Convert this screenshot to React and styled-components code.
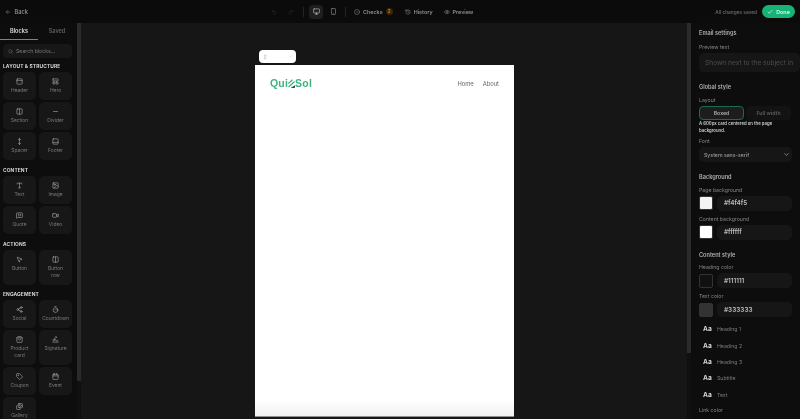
import styled, { createGlobalStyle } from "styled-components";
import {
  ArrowLeft, Undo2, Redo2, Monitor, Smartphone, CircleCheck, History, Eye, Check, Search,
  PanelTop, LayoutPanelTop, Columns2, Minus, MoveVertical, PanelBottom, Type, Image, MessageSquareQuote, Video,
  MousePointer2, Share2, Timer, ShoppingBag, Signature, Tag, Calendar, Images,
  ChevronDown, GripVertical,
} from "lucide-react";

const GlobalStyle = createGlobalStyle`
  html, body { margin: 0; padding: 0; background: #0b0b0b; }
  * { box-sizing: border-box; }
  body { font-family: Inter, "Liberation Sans", sans-serif; overflow: hidden; }
`;

const Page = styled.div`
  width: 800px;
  height: 419px;
  display: flex;
  flex-direction: column;
  overflow: hidden;
  color: #ccc;
  will-change: transform;
`;

const TopBar = styled.header`
  height: 23px;
  flex: none;
  background: #0b0b0b;
  display: flex;
  align-items: center;
  padding: 0 5px;
  font-size: 5.4px;
  font-weight: 600;
`;
const BackLink = styled.div`
  display: flex;
  align-items: center;
  gap: 3.5px;
  width: 23px;
  color: #8a8a8a;
  font-size: 5.6px;
`;
const Center = styled.div`
  display: flex;
  align-items: center;
  margin-left: 239px;
`;
const IconBtn = styled.div`
  width: 14px;
  height: 14px;
  display: flex;
  align-items: center;
  justify-content: center;
  border-radius: 4px;
  margin-right: ${(p) => p.$mr || 0}px;
  color: ${(p) => p.$color || "#999"};
  background: ${(p) => (p.$active ? "#1f1f1f" : "transparent")};
`;
const Sep = styled.div`
  width: 1px;
  height: 10px;
  background: #242424;
  margin-right: ${(p) => p.$mr}px;
`;
const ToolLink = styled.div`
  display: flex;
  align-items: center;
  gap: 3px;
  color: #8e8e8e;
  margin-right: ${(p) => p.$mr}px;
`;
const Badge = styled.span`
  width: 7px;
  height: 7px;
  border-radius: 50%;
  background: #3a2508;
  color: #c98a1c;
  font-size: 4.5px;
  display: flex;
  align-items: center;
  justify-content: center;
`;
const TopRight = styled.div`
  margin-left: auto;
  display: flex;
  align-items: center;
  gap: 5px;
  font-size: 4.8px;
  font-weight: 500;
  color: #6e6e6e;
`;
const DoneBtn = styled.div`
  width: 33px;
  height: 13px;
  border-radius: 7px;
  background: #16b377;
  color: #d8f5e8;
  font-size: 5.4px;
  font-weight: 600;
  display: flex;
  align-items: center;
  justify-content: center;
  gap: 3px;
`;

const Body = styled.div`
  flex: 1;
  display: flex;
  min-height: 0;
`;

const LeftPanel = styled.aside`
  width: 77px;
  flex: none;
  background: #0d0d0d;
  overflow: hidden;
`;
const Scrollbar = styled.div`
  width: 4px;
  height: ${(p) => p.$h}px;
  background: #2b2b2b;
`;
const ScrollTrack = styled.div`
  width: 4px;
  flex: none;
  background: #101010;
`;
const Tabs = styled.div`
  display: flex;
  height: 17px;
  font-size: 5.6px;
  font-weight: 600;
`;
const Tab = styled.div`
  width: 38px;
  display: flex;
  align-items: center;
  justify-content: center;
  color: ${(p) => (p.$active ? "#ddd" : "#5e5e5e")};
  border-bottom: 1px solid ${(p) => (p.$active ? "#22b573" : "transparent")};
`;
const SearchBox = styled.div`
  margin: 4px 5px 0 3px;
  height: 14px;
  border-radius: 4px;
  background: #171717;
  display: flex;
  align-items: center;
  gap: 3px;
  padding: 0 5px;
  font-size: 5.2px;
  color: #777;
`;
const GroupTitle = styled.div`
  font-size: 4.9px;
  font-weight: 700;
  letter-spacing: 0.1px;
  color: #d5d5d5;
  padding: 1px 3px 0;
  height: 14px;
  display: flex;
  align-items: center;
`;
const Grid = styled.div`
  display: grid;
  grid-template-columns: 33px 33px;
  gap: 2px 3px;
  padding: 0 3px;
  margin-bottom: ${(p) => p.$mb}px;
`;
const Card = styled.div`
  min-height: 28px;
  padding: 6px 2px 6px;
  border-radius: 5px;
  background: #171717;
  display: flex;
  flex-direction: column;
  align-items: center;
  gap: 2px;
  text-align: center;
  font-size: 4.9px;
  line-height: 7px;
  color: #7a7a7a;
  svg { color: #b0b0b0; flex: none; }
`;
const CardLabel = styled.span`
  width: min-content;
`;

const Canvas = styled.main`
  flex: 1;
  background: #161616;
  display: flex;
  flex-direction: column;
  align-items: flex-start;
  padding: 27px 0 0 174px;
`;
const Handle = styled.div`
  width: 37px;
  height: 13px;
  border-radius: 4px;
  background: #fff;
  margin: 0 0 2px 4px;
  display: flex;
  align-items: center;
  justify-content: space-between;
  padding: 0 3px;
  color: #c4c4c4;
`;
const EmailCard = styled.div`
  width: 259px;
  flex: 1;
  margin-bottom: 2px;
  background: linear-gradient(#fff calc(100% - 16px), #f1f1f1);
  border-bottom: 1px solid #8f8f8f;
`;
const EmailHeader = styled.div`
  display: flex;
  justify-content: space-between;
  align-items: center;
  height: 36px;
  padding: 0 15px;
`;
const Logo = styled.div`
  display: flex;
  align-items: center;
  font-family: "Liberation Sans", sans-serif;
  font-size: 10.5px;
  font-weight: 700;
  letter-spacing: 0.2px;
  color: #3fb27f;
`;
const EmailNav = styled.nav`
  display: flex;
  gap: 9px;
  font-size: 5.8px;
  color: #666;
`;

const RightPanel = styled.aside`
  width: 109px;
  flex: none;
  background: #0d0d0d;
  padding: 6px 8px 0;
  overflow: hidden;
  font-size: 5.2px;
  color: #8a8a8a;
`;
const Heading = styled.div`
  font-weight: 600;
  color: #b0b0b0;
  font-size: 5.6px;
  line-height: 8px;
  margin: ${(p) => p.$mt || 0}px 0 ${(p) => p.$mb || 4.5}px;
`;
const Label = styled.div`
  line-height: 8px;
  margin-bottom: 2px;
  color: #858585;
`;
const TextInput = styled.div`
  height: 19px;
  width: 101px;
  border-radius: 5px;
  background: #161616;
  color: #4d4d4d;
  font-size: 6.6px;
  display: flex;
  align-items: center;
  padding-left: 6px;
  white-space: nowrap;
  overflow: hidden;
`;
const Segment = styled.div`
  display: flex;
  gap: 2px;
`;
const SegButton = styled.div`
  width: 45px;
  height: 14px;
  border-radius: 4px;
  display: flex;
  align-items: center;
  justify-content: center;
  font-weight: 600;
  background: ${(p) => (p.$on ? "#1d1d1d" : "#131313")};
  border: 1px solid ${(p) => (p.$on ? "#1e6b4c" : "transparent")};
  color: ${(p) => (p.$on ? "#aaa" : "#5f5f5f")};
`;
const Hint = styled.div`
  max-width: 80px;
  color: #c8c8c8;
  font-size: 4.3px;
  font-weight: 600;
  line-height: 7px;
  margin: 0 0 3.5px;
`;
const SelectBox = styled.div`
  height: 15px;
  width: 93px;
  border-radius: 5px;
  background: #161616;
  display: flex;
  align-items: center;
  justify-content: space-between;
  padding: 0 2px 0 5px;
  font-weight: 500;
  color: #9a9a9a;
  svg { color: #c8c8c8; }
`;
const ColorRow = styled.div`
  display: flex;
  align-items: center;
  gap: 4px;
  margin: 1px 0 4px;
`;
const Swatch = styled.div`
  width: 14px;
  height: 14px;
  border-radius: 2px;
  background: ${(p) => p.$c};
  border: 1px solid #333;
`;
const HexInput = styled.div`
  width: 75px;
  height: 15px;
  border-radius: 5px;
  background: #161616;
  display: flex;
  align-items: center;
  padding-left: 7px;
  color: #bbb;
  font-size: 6.4px;
  font-weight: 600;
`;
const StyleRow = styled.div`
  display: flex;
  align-items: center;
  height: 16.4px;
  padding-left: 4px;
  gap: 5px;
  color: #7a7a7a;
  b { color: #d8d8d8; font-size: 6.6px; width: 9px; }
`;
const LinkLabel = styled(Label)`
  margin-top: 3px;
`;

const groups = [
  { title: "LAYOUT & STRUCTURE", mb: 2, items: [["Header", PanelTop], ["Hero", LayoutPanelTop], ["Section", Columns2], ["Divider", Minus], ["Spacer", MoveVertical], ["Footer", PanelBottom]] },
  { title: "CONTENT", mb: 2, items: [["Text", Type], ["Image", Image], ["Quote", MessageSquareQuote], ["Video", Video]] },
  { title: "ACTIONS", mb: 1, items: [["Button", MousePointer2], ["Button row", Columns2]] },
  { title: "ENGAGEMENT", mb: 2, items: [["Social", Share2], ["Countdown", Timer], ["Product card", ShoppingBag], ["Signature", Signature], ["Coupon", Tag], ["Event", Calendar], ["Gallery", Images]] },
];

const App = () => (
  <Page>
    <GlobalStyle />
    <TopBar>
      <BackLink><ArrowLeft size={6} />Back</BackLink>
      <Center>
        <IconBtn $mr={3} $color="#333"><Undo2 size={6} /></IconBtn>
        <IconBtn $mr={5} $color="#333"><Redo2 size={6} /></IconBtn>
        <Sep $mr={5} />
        <IconBtn $active $color="#ccc" $mr={3}><Monitor size={7} /></IconBtn>
        <IconBtn $mr={5}><Smartphone size={7} /></IconBtn>
        <Sep $mr={8} />
        <ToolLink $mr={12}><CircleCheck size={6} />Checks <Badge>2</Badge></ToolLink>
        <ToolLink $mr={11}><History size={6} />History</ToolLink>
        <ToolLink $mr={0}><Eye size={6} />Preview</ToolLink>
      </Center>
      <TopRight>
        All changes saved
        <DoneBtn><Check size={6} strokeWidth={3} />Done</DoneBtn>
      </TopRight>
    </TopBar>
    <Body>
      <LeftPanel>
        <Tabs><Tab $active>Blocks</Tab><Tab>Saved</Tab></Tabs>
        <SearchBox><Search size={5} />Search blocks...</SearchBox>
        {groups.map((g) => (
          <div key={g.title}>
            <GroupTitle>{g.title}</GroupTitle>
            <Grid $mb={g.mb}>
              {g.items.map(([label, Ico]) => (
                <Card key={label}><Ico size={7} /><CardLabel>{label}</CardLabel></Card>
              ))}
            </Grid>
          </div>
        ))}
      </LeftPanel>
      <ScrollTrack><Scrollbar $h={358} /></ScrollTrack>
      <Canvas>
        <Handle><GripVertical size={6} /><ChevronDown size={5} /></Handle>
        <EmailCard>
          <EmailHeader>
            <Logo>
              Qui
              <svg width="7" height="9" viewBox="0 0 7 9" aria-hidden="true">
                <path d="M0.3 4.5 L4.5 0.8 M0.5 8 L6.6 2.5 M3 8.3 L6.6 8.3" stroke="#3fb27f" strokeWidth="1.3" fill="none" />
                <path d="M3.8 8.8 L6.8 6.2 V8.8 Z" fill="#222" />
              </svg>
              Sol
            </Logo>
            <EmailNav><span>Home</span><span>About</span></EmailNav>
          </EmailHeader>
        </EmailCard>
      </Canvas>
      <ScrollTrack><Scrollbar $h={330} /></ScrollTrack>
      <RightPanel>
        <Heading $mb={6}>Email settings</Heading>
        <Label>Preview text</Label>
        <TextInput>Shown next to the subject in</TextInput>
        <Heading $mt={11}>Global style</Heading>
        <Label>Layout</Label>
        <Segment><SegButton $on>Boxed</SegButton><SegButton>Full width</SegButton></Segment>
        <Hint>A 600px card centered on the page background.</Hint>
        <Label>Font</Label>
        <SelectBox>System sans-serif<ChevronDown size={7} /></SelectBox>
        <Heading $mt={11}>Background</Heading>
        <Label>Page background</Label>
        <ColorRow><Swatch $c="#f4f4f5" /><HexInput>#f4f4f5</HexInput></ColorRow>
        <Label>Content background</Label>
        <ColorRow><Swatch $c="#ffffff" /><HexInput>#ffffff</HexInput></ColorRow>
        <Heading $mt={11}>Content style</Heading>
        <Label>Heading color</Label>
        <ColorRow><Swatch $c="#111111" /><HexInput>#111111</HexInput></ColorRow>
        <Label>Text color</Label>
        <ColorRow><Swatch $c="#333333" /><HexInput>#333333</HexInput></ColorRow>
        {["Heading 1", "Heading 2", "Heading 3", "Subtitle", "Text"].map((s) => (
          <StyleRow key={s}><b>Aa</b>{s}</StyleRow>
        ))}
        <LinkLabel>Link color</LinkLabel>
      </RightPanel>
    </Body>
  </Page>
);

export default App;
